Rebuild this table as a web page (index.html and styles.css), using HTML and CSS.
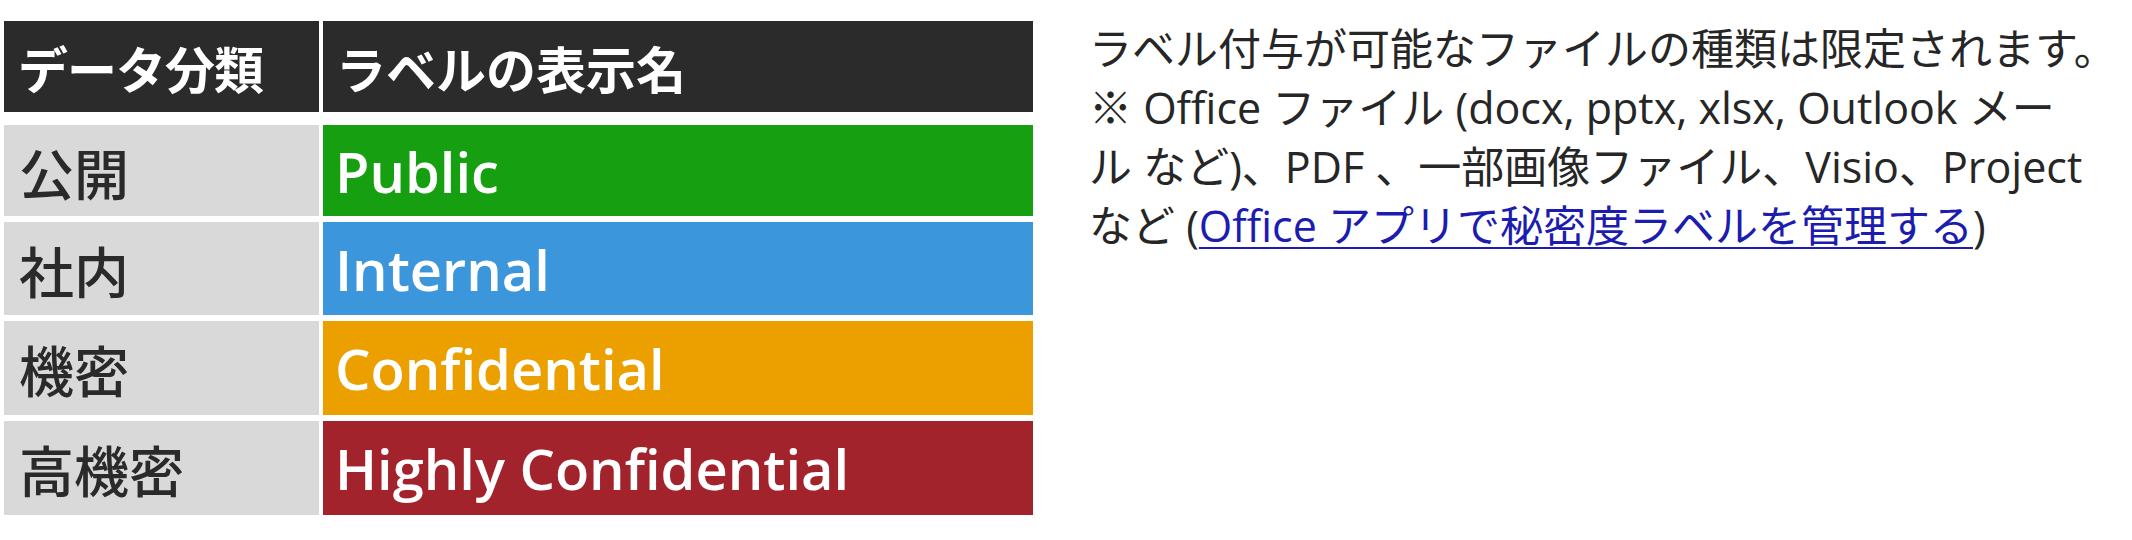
FILE: index.html
```html
<!DOCTYPE html>
<html lang="ja">
<head>
<meta charset="utf-8">
<title>秘密度ラベル</title>
<link rel="stylesheet" href="styles.css">
</head>
<body>
<div class="page">
  <div class="table">
    <div class="row head">
      <div class="cell key">データ分類</div>
      <div class="cell val">ラベルの表示名</div>
    </div>
    <div class="rows">
      <div class="row r1">
        <div class="cell key">公開</div>
        <div class="cell val public">Public</div>
      </div>
      <div class="row r2">
        <div class="cell key">社内</div>
        <div class="cell val internal">Internal</div>
      </div>
      <div class="row r3">
        <div class="cell key">機密</div>
        <div class="cell val confidential">Confidential</div>
      </div>
      <div class="row r4">
        <div class="cell key">高機密</div>
        <div class="cell val highly">Highly Confidential</div>
      </div>
    </div>
  </div>
  <div class="note">
    <div class="line">ラベル付与が可能なファイルの種類は限定されます。</div>
    <div class="line">※ Office ファイル (docx, pptx, xlsx, Outlook メー</div>
    <div class="line">ル など)、PDF 、一部画像ファイル、Visio、Project</div>
    <div class="line">など (<a class="link" href="#">Office アプリで秘密度ラベルを管理する</a>)</div>
  </div>
</div>
</body>
</html>
```

FILE: styles.css
```css
html, body {
  margin: 0;
  padding: 0;
  background: #ffffff;
}

.page {
  display: flex;
  align-items: flex-start;
  width: 2132px;
  height: 540px;
  overflow: hidden;
}

.table {
  display: flex;
  flex-direction: column;
  padding-top: 21px;
  padding-left: 4px;
}

.rows {
  display: flex;
  flex-direction: column;
  gap: 6px;
}

.row {
  display: grid;
  grid-template-columns: 315px 710px;
  column-gap: 4px;
}

.head {
  height: 91px;
  margin-bottom: 13px;
}

.r1 { height: 91px; }
.r2 { height: 93px; }
.r3 { height: 94px; }
.r4 { height: 94px; }

.cell {
  display: flex;
  align-items: center;
  white-space: nowrap;
}

.head .cell {
  background: #2b2b2b;
  color: #ffffff;
  font-family: "Noto Sans CJK JP", sans-serif;
  font-weight: 700;
  font-size: 50px;
}

.head .key {
  padding-left: 14px;
  letter-spacing: -1px;
}

.head .val {
  padding-left: 13px;
}

.rows .key {
  background: #d9d9d9;
  color: #2a2a2a;
  font-family: "Noto Sans CJK JP", sans-serif;
  font-weight: 500;
  font-size: 55px;
  padding-left: 15px;
}

.rows .val {
  color: #ffffff;
  font-family: "Open Sans", "Noto Sans", sans-serif;
  font-weight: 600;
  font-size: 56px;
  padding-left: 12px;
}

.public { background: #16a011; }
.internal { background: #3c96dc; }
.confidential { background: #eba000; }
.highly { background: #a2232b; }

.note {
  margin-left: 56px;
  margin-top: 19px;
  font-family: "Open Sans", "Noto Sans CJK JP", sans-serif;
  font-size: 43px;
  line-height: 59px;
  color: #262626;
}

.line {
  white-space: nowrap;
}

.link {
  color: #1c1cb0;
  text-decoration: underline;
  text-decoration-thickness: 2px;
  text-underline-offset: 5px;
}
```
